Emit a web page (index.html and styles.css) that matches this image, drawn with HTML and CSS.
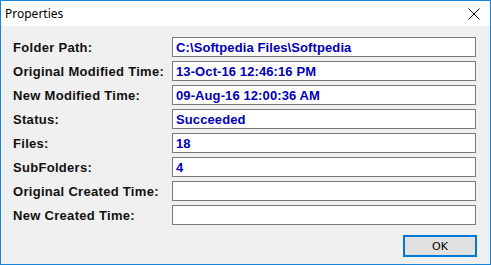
FILE: index.html
```html
<!DOCTYPE html>
<html lang="en">
<head>
<meta charset="UTF-8" />
<title>Properties</title>
<link rel="stylesheet" href="styles.css">
</head>
<body>

<div class="window">
  <div class="titlebar">
    <span class="title">Properties</span>
    <svg class="close" width="12" height="12" viewBox="0 0 12 12">
      <path d="M0.5 0.5 L11.5 11.5 M11.5 0.5 L0.5 11.5" stroke="#000" stroke-width="1" fill="none"/>
    </svg>
  </div>

  <div class="body">
    <div class="form">
      <label>Folder Path:</label>
      <div class="field">C:\Softpedia Files\Softpedia</div>
      <label>Original Modified Time:</label>
      <div class="field">13-Oct-16 12:46:16 PM</div>
      <label>New Modified Time:</label>
      <div class="field">09-Aug-16 12:00:36 AM</div>
      <label>Status:</label>
      <div class="field">Succeeded</div>
      <label>Files:</label>
      <div class="field">18</div>
      <label>SubFolders:</label>
      <div class="field">4</div>
      <label>Original Created Time:</label>
      <div class="field"></div>
      <label>New Created Time:</label>
      <div class="field"></div>
    </div>

    <div class="buttons">
      <button class="ok">OK</button>
    </div>
  </div>
</div>

</body>
</html>
```

FILE: styles.css
```css
body {
  margin: 0;
  padding: 0;
  font-family: "Liberation Sans", Arial, sans-serif;
}

/* окно */
.window {
  width: 491px;
  height: 265px;
  box-sizing: border-box;
  border: 1px solid #1883d7;
  background: #f0f0f0;
  display: flex;
  flex-direction: column;
}

.titlebar {
  height: 25px;
  background: #fff;
  display: flex;
  align-items: center;
  justify-content: space-between;
  padding: 0 10px 0 4px;
}

.title {
  font-family: "Noto Sans", "Open Sans", sans-serif;
  font-size: 12px;
  color: #000;
}

.body {
  flex: 1;
  padding: 11px 13px 0 12px;
}

/* поля */
.form {
  display: grid;
  grid-template-columns: 159px 304px;
  grid-auto-rows: 20px;
  row-gap: 4px;
}

.form label {
  font-size: 13px;
  font-weight: bold;
  letter-spacing: 0.3px;
  color: #111;
  display: flex;
  align-items: center;
}

.field {
  box-sizing: border-box;
  border: 1px solid #7a7a7a;
  background: #fff;
  color: #0000b4;
  font-size: 13px;
  font-weight: bold;
  letter-spacing: 0.1px;
  padding-left: 3px;
  display: flex;
  align-items: center;
}

.buttons {
  display: flex;
  justify-content: flex-end;
  margin-top: 10px;
}

.ok {
  width: 74px;
  height: 22px;
  box-sizing: border-box;
  border: 2px solid #0078d7;
  background: #e1e1e1;
  font-family: "DejaVu Sans", sans-serif;
  font-size: 11px;
  color: #000;
  padding: 0;
  margin-right: 0;
}
```
